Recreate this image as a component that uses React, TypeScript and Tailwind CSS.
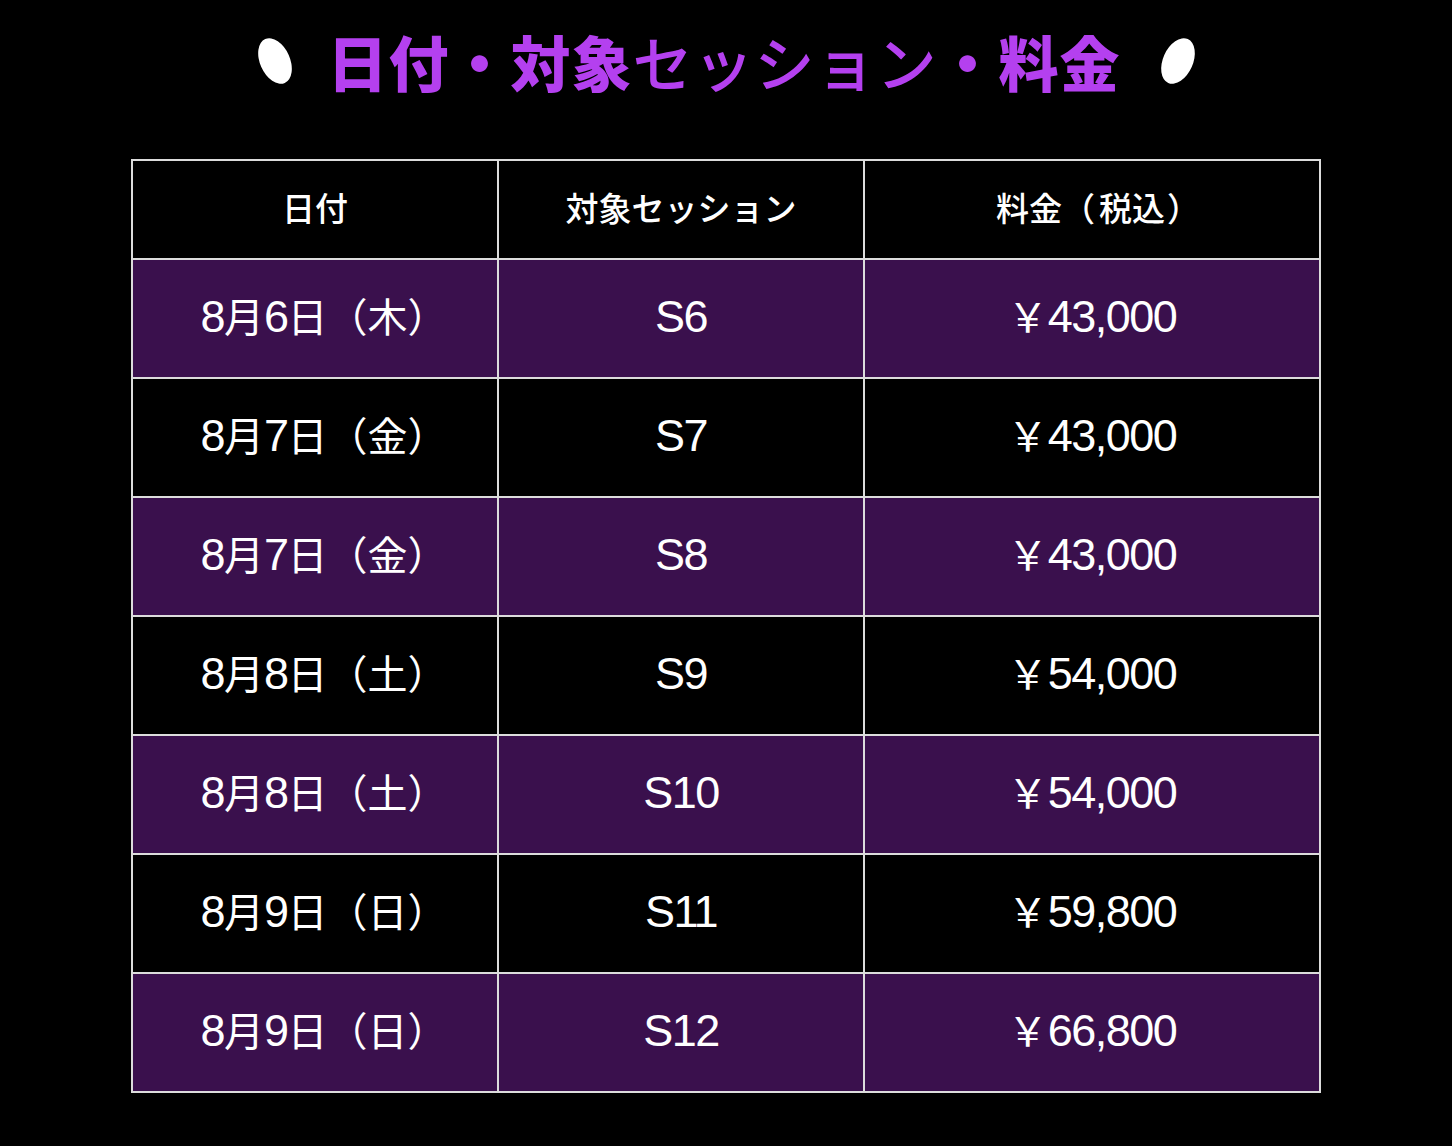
const rows = [
  { date: "8月6日（木）", session: "S6", price: "￥43,000" },
  { date: "8月7日（金）", session: "S7", price: "￥43,000" },
  { date: "8月7日（金）", session: "S8", price: "￥43,000" },
  { date: "8月8日（土）", session: "S9", price: "￥54,000" },
  { date: "8月8日（土）", session: "S10", price: "￥54,000" },
  { date: "8月9日（日）", session: "S11", price: "￥59,800" },
  { date: "8月9日（日）", session: "S12", price: "￥66,800" },
]

const jp = { fontFamily: '"Noto Sans CJK JP", sans-serif' }

// latin digits are set a bit larger than the kanji, like the original
function Mixed({ text }: { text: string }) {
  const parts = text.match(/[\x00-\x7f]+|[^\x00-\x7f]+/g) ?? []
  return (
    <>
      {parts.map((p, i) =>
        /^[\x00-\x7f]/.test(p) ? (
          <span key={i}>{p}</span>
        ) : (
          <span key={i} className="text-[40px] tracking-[0px]" style={jp}>
            {p}
          </span>
        )
      )}
    </>
  )
}

export default function App() {
  return (
    <div
      className="min-h-[1146px] bg-black pt-[25px]"
      style={{ fontFamily: '"Liberation Sans", "Noto Sans CJK JP", sans-serif' }}
    >
      <div className="flex items-center justify-center h-[72px]">
        <span className="block w-[30px] h-[48px] rounded-[50%] bg-white -rotate-[24deg] mr-[38px]" />
        <h2 className="text-[60px] leading-none font-black text-[#b440ef] tracking-[1px]" style={jp}>
          日付・対象<span className="font-medium">セッション</span>・料金
        </h2>
        <span className="block w-[30px] h-[48px] rounded-[50%] bg-white rotate-[24deg] ml-[42px]" />
      </div>

      <table className="mx-auto mt-[62px] border-collapse text-white">
        <thead>
          <tr className="h-[99px] bg-black text-[33px] font-medium" style={jp}>
            <th className="w-[366px] border-2 border-[#dcdcdc] font-medium pb-[4px]">日付</th>
            <th className="w-[366px] border-2 border-[#dcdcdc] font-medium pb-[4px]">対象セッション</th>
            <th className="w-[456px] border-2 border-[#dcdcdc] font-medium pb-[4px] pl-[12px]">
              料金<span className="tracking-[4px]">（</span>税込<span className="pl-[2px]">）</span>
            </th>
          </tr>
        </thead>
        <tbody>
          {rows.map((r, i) => (
            <tr key={i} className={i % 2 === 0 ? "h-[119px] bg-[#3a104d]" : "h-[119px] bg-black"}>
              <td className="border-2 border-[#dcdcdc] text-center text-[45px] tracking-[-1.5px] pb-[4px] pl-[18px]">
                <Mixed text={r.date} />
              </td>
              <td className="border-2 border-[#dcdcdc] text-center text-[45px] tracking-[-1.5px] pb-[4px]">{r.session}</td>
              <td className="border-2 border-[#dcdcdc] text-center text-[45px] tracking-[-1.5px] pb-[4px]">
                <Mixed text={r.price} />
              </td>
            </tr>
          ))}
        </tbody>
      </table>
    </div>
  )
}
